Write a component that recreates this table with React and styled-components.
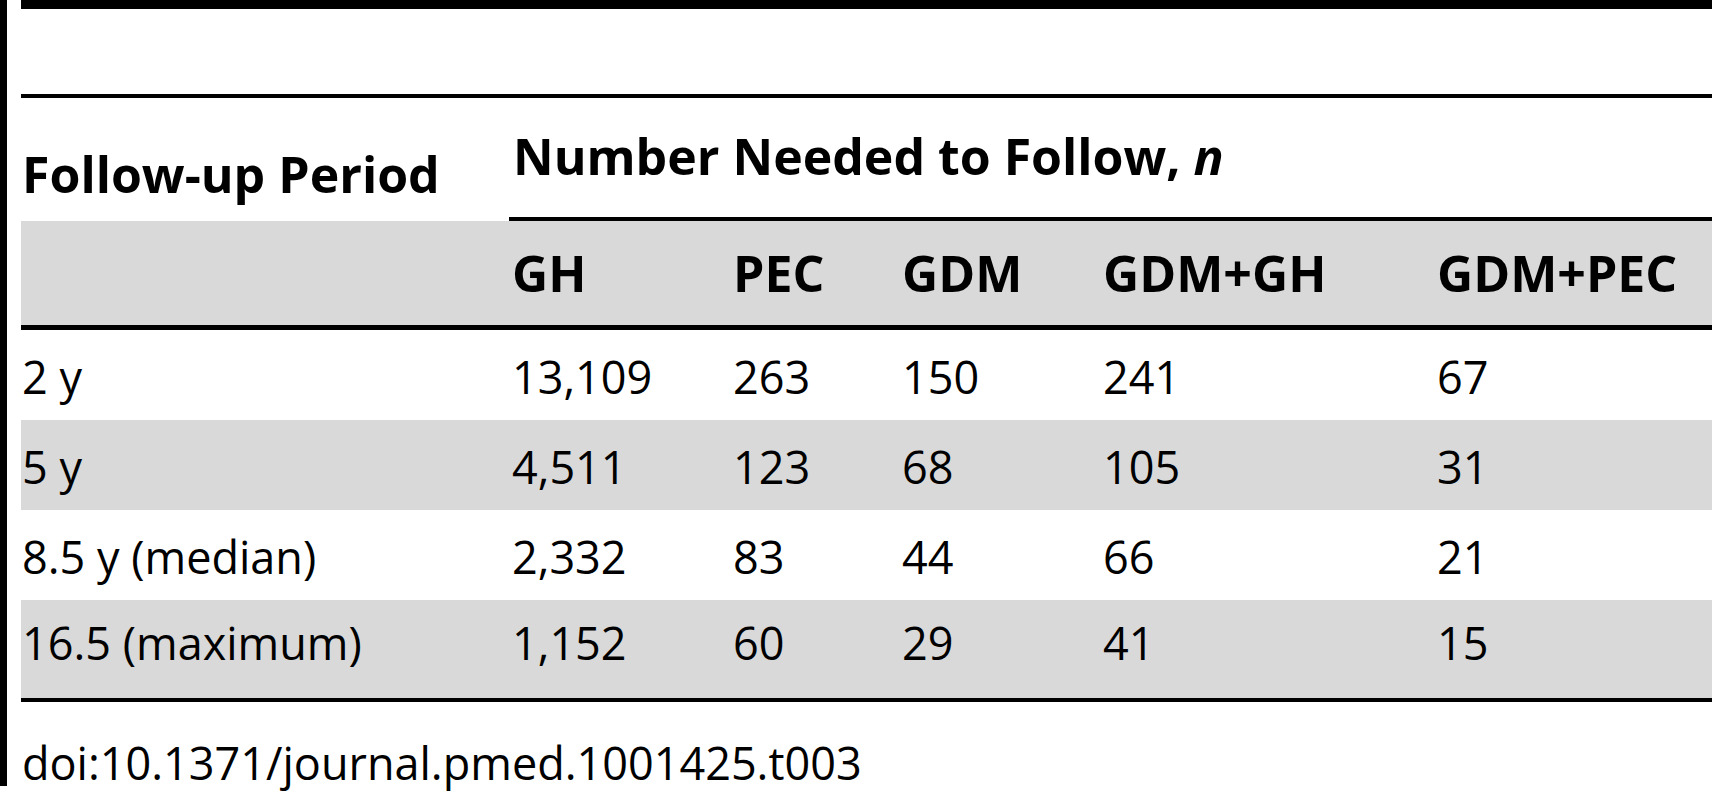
import React from "react";
import styled, { createGlobalStyle } from "styled-components";

const GlobalStyle = createGlobalStyle`
  html, body {
    margin: 0;
    padding: 0;
    background: #ffffff;
  }
  body {
    font-family: "Open Sans", "Noto Sans", sans-serif;
    color: #000;
  }
`;

const Page = styled.div`
  width: 1712px;
  height: 800px;
  display: flex;
  align-items: flex-start;
`;

const SideBar = styled.div`
  width: 7px;
  height: 786px;
  background: #000;
  flex: none;
`;

const Content = styled.div`
  flex: 1;
  padding-left: 14px;
  display: flex;
  flex-direction: column;
`;

const Rule = styled.div`
  height: ${(p) => p.$thick}px;
  background: #000;
  flex: none;
`;

const Spacer = styled.div`
  height: ${(p) => p.$h}px;
  flex: none;
`;

const Table = styled.table`
  width: 100%;
  border-collapse: separate;
  border-spacing: 0;
  table-layout: fixed;
`;

const TitleRow = styled.tr`
  height: 123px;
`;

const TitleCell = styled.th`
  text-align: left;
  font-weight: 700;
  font-size: 50px;
  padding: 0 0 ${(p) => p.$pb}px ${(p) => p.$pl}px;
  vertical-align: bottom;
  border-bottom: ${(p) => (p.$underline ? "4px solid #000" : "none")};
  white-space: nowrap;
`;

const SubHeadRow = styled.tr`
  background: #d9d9d9;
  height: 109px;
`;

const SubHeadCell = styled.th`
  text-align: left;
  font-weight: 700;
  font-size: 50px;
  padding: 0 0 0 3px;
  vertical-align: middle;
  border-bottom: 5px solid #000;
  white-space: nowrap;
`;

const BodyRow = styled.tr`
  background: ${(p) => (p.$shaded ? "#d9d9d9" : "#ffffff")};
  height: ${(p) => (p.$last ? 102 : 90)}px;
`;

const Cell = styled.td`
  font-size: 45px;
  padding: 3px 0 ${(p) => (p.$last ? 16 : 0)}px ${(p) => (p.$first ? 1 : 3)}px;
  vertical-align: middle;
  white-space: nowrap;
  border-bottom: ${(p) => (p.$last ? "4px solid #000" : "none")};
`;

const Doi = styled.div`
  font-size: 45px;
  padding: 30px 0 0 1px;
`;

const columns = ["GH", "PEC", "GDM", "GDM+GH", "GDM+PEC"];
const widths = [488, 221, 169, 201, 334];

const rows = [
  ["2 y", "13,109", "263", "150", "241", "67"],
  ["5 y", "4,511", "123", "68", "105", "31"],
  ["8.5 y (median)", "2,332", "83", "44", "66", "21"],
  ["16.5 (maximum)", "1,152", "60", "29", "41", "15"],
];

export default function App() {
  return (
    <Page>
      <GlobalStyle />
      <SideBar />
      <Content>
        <Rule $thick={9} />
        <Spacer $h={85} />
        <Rule $thick={4} />
        <Table>
          <colgroup>
            {widths.map((w, i) => (
              <col key={i} style={{ width: w }} />
            ))}
            <col />
          </colgroup>
          <thead>
            <TitleRow>
              <TitleCell $pb={13} $pl={1}>Follow-up Period</TitleCell>
              <TitleCell colSpan={5} $pb={27} $pl={4} $underline>
                Number Needed to Follow, <i>n</i>
              </TitleCell>
            </TitleRow>
            <SubHeadRow>
              <SubHeadCell />
              {columns.map((c) => (
                <SubHeadCell key={c}>{c}</SubHeadCell>
              ))}
            </SubHeadRow>
          </thead>
          <tbody>
            {rows.map((r, i) => {
              const last = i === rows.length - 1;
              return (
                <BodyRow key={r[0]} $shaded={i % 2 === 1} $last={last}>
                  {r.map((v, j) => (
                    <Cell key={j} $first={j === 0} $last={last}>
                      {v}
                    </Cell>
                  ))}
                </BodyRow>
              );
            })}
          </tbody>
        </Table>
        <Doi>doi:10.1371/journal.pmed.1001425.t003</Doi>
      </Content>
    </Page>
  );
}
